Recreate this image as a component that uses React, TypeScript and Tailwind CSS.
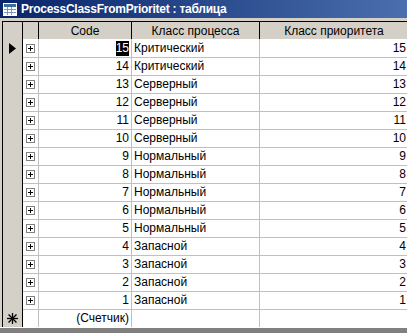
import React from 'react'

type Row = { code: number; cls: string; prio: number }

const rows: Row[] = [
  { code: 15, cls: 'Критический', prio: 15 },
  { code: 14, cls: 'Критический', prio: 14 },
  { code: 13, cls: 'Серверный', prio: 13 },
  { code: 12, cls: 'Серверный', prio: 12 },
  { code: 11, cls: 'Серверный', prio: 11 },
  { code: 10, cls: 'Серверный', prio: 10 },
  { code: 9, cls: 'Нормальный', prio: 9 },
  { code: 8, cls: 'Нормальный', prio: 8 },
  { code: 7, cls: 'Нормальный', prio: 7 },
  { code: 6, cls: 'Нормальный', prio: 6 },
  { code: 5, cls: 'Нормальный', prio: 5 },
  { code: 4, cls: 'Запасной', prio: 4 },
  { code: 3, cls: 'Запасной', prio: 3 },
  { code: 2, cls: 'Запасной', prio: 2 },
  { code: 1, cls: 'Запасной', prio: 1 },
]

const cols = 'grid grid-cols-[20px_16px_93px_128px_148px]'

function TableIcon() {
  return (
    <svg width="14" height="13" viewBox="0 0 14 13" className="shrink-0">
      <rect x="0.5" y="0.5" width="13" height="12" fill="#ffffff" stroke="#ffffff" />
      <rect x="1" y="1" width="12" height="3" fill="#3a6ea5" />
      <g stroke="#7a96c8" strokeWidth="1">
        <line x1="1" y1="6.5" x2="13" y2="6.5" />
        <line x1="1" y1="9.5" x2="13" y2="9.5" />
        <line x1="4.5" y1="4" x2="4.5" y2="12" />
        <line x1="8.5" y1="4" x2="8.5" y2="12" />
      </g>
    </svg>
  )
}

function PlusBox() {
  return (
    <div className="w-[9px] h-[9px] border border-[#808080] bg-white flex items-center justify-center">
      <svg width="7" height="7" viewBox="0 0 7 7">
        <path d="M1 3.5h5M3.5 1v5" stroke="#000" strokeWidth="1" shapeRendering="crispEdges" />
      </svg>
    </div>
  )
}

function Arrow() {
  return (
    <svg width="7" height="11" viewBox="0 0 7 11">
      <path d="M0 0 L7 5.5 L0 11 Z" fill="#000" />
    </svg>
  )
}

function Star() {
  return (
    <svg width="11" height="11" viewBox="0 0 11 11">
      <g stroke="#000" strokeWidth="1.3" strokeLinecap="square">
        <line x1="5.5" y1="0.5" x2="5.5" y2="10.5" />
        <line x1="0.5" y1="5.5" x2="10.5" y2="5.5" />
        <line x1="2" y1="2" x2="9" y2="9" />
        <line x1="9" y1="2" x2="2" y2="9" />
      </g>
    </svg>
  )
}

export default function App() {
  return (
    <div
      className="w-[407px] h-[333px] bg-[#808080] overflow-hidden flex flex-col text-black"
      style={{ fontFamily: '"Liberation Sans", Arial, sans-serif' }}
    >
      {/* Title bar */}
      <div className="h-[18px] bg-gradient-to-r from-[#0a246a] to-[#4b6fae] flex items-center gap-[4px] pl-[3px]">
        <TableIcon />
        <span className="text-white font-bold text-[12px] leading-none tracking-[-0.25px]">
          ProcessClassFromPrioritet : таблица
        </span>
      </div>

      {/* frame */}
      <div className="bg-[#d4d0c8] pl-[2px] pt-[3px]">
        {/* Header */}
        <div className={`${cols} h-[18px] border-t border-l border-black bg-[#d4d0c8] text-[12px]`}>
          <div className="border-r border-b border-black" />
          <div className="border-r border-b border-black" />
          <div className="border-r border-b border-black flex items-center justify-center">Code</div>
          <div className="border-r border-b border-black flex items-center justify-center">Класс процесса</div>
          <div className="border-b border-black flex items-center justify-center">Класс приоритета</div>
        </div>
      </div>

      {/* Body */}
      <div className="bg-[#d4d0c8] pl-[2px]">
        <div className="bg-white border-l border-black text-[12px]">
          {rows.map((r, i) => (
            <div key={r.code} className={`${cols} h-[18px]`}>
              <div className="bg-[#d4d0c8] border-r border-b border-black flex items-center pl-[6px]">
                {i === 0 && <Arrow />}
              </div>
              <div className="border-r border-b border-[#c0c0c0] flex items-center justify-center">
                <PlusBox />
              </div>
              <div className="border-r border-b border-[#c0c0c0] flex items-center justify-end pr-[2px]">
                {i === 0 ? (
                  <span className="bg-black text-white leading-[15px]">{r.code}</span>
                ) : (
                  <span>{r.code}</span>
                )}
              </div>
              <div className="border-r border-b border-[#c0c0c0] flex items-center pl-[2px]">{r.cls}</div>
              <div className="border-b border-[#c0c0c0] flex items-center justify-end pr-[2px]">{r.prio}</div>
            </div>
          ))}
          {/* new record row */}
          <div className={`${cols} h-[18px]`}>
            <div className="bg-[#d4d0c8] border-r border-b border-black flex items-center justify-center">
              <Star />
            </div>
            <div className="border-r border-b border-[#c0c0c0]" />
            <div className="border-r border-b border-[#c0c0c0] flex items-center justify-end pr-[2px]">(Счетчик)</div>
            <div className="border-r border-b border-[#c0c0c0]" />
            <div className="border-b border-[#c0c0c0]" />
          </div>
        </div>
      </div>
      <div className="h-[1px] bg-white" />
    </div>
  )
}
